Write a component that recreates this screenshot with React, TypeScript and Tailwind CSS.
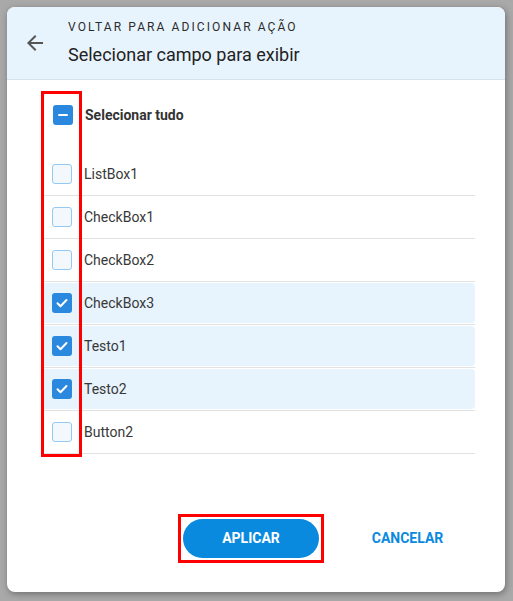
import { useState } from "react";

const FIELDS = [
  { name: "ListBox1", checked: false },
  { name: "CheckBox1", checked: false },
  { name: "CheckBox2", checked: false },
  { name: "CheckBox3", checked: true },
  { name: "Testo1", checked: true },
  { name: "Testo2", checked: true },
  { name: "Button2", checked: false },
];

function Box({ state }: { state: "off" | "on" | "mixed" }) {
  if (state === "off") {
    return <span className="block h-5 w-5 shrink-0 rounded-[3px] border border-[#93c9f2] bg-[#f3f8fd]" />;
  }
  return (
    <span className="flex h-5 w-5 shrink-0 items-center justify-center rounded-[3px] bg-[#2a88de]">
      {state === "on" ? (
        <svg width="14" height="14" viewBox="0 0 14 14" fill="none">
          <path d="M2.5 7.2l3 3 6-6.2" stroke="#fff" strokeWidth="2" strokeLinecap="round" strokeLinejoin="round" />
        </svg>
      ) : (
        <span className="block h-[2px] w-[10px] rounded-sm bg-white" />
      )}
    </span>
  );
}

export default function App() {
  const [fields, setFields] = useState(FIELDS);
  const count = fields.filter((f) => f.checked).length;
  const all = count === 0 ? "off" : count === fields.length ? "on" : "mixed";

  return (
    <div className="h-[601px] w-[513px] bg-[#a9a9a9] p-[7px] font-['Roboto',sans-serif]">
      <div className="relative flex h-[585px] w-[498px] flex-col overflow-hidden rounded-[8px] bg-white shadow-[1px_2px_7px_rgba(0,0,0,0.35)]">
        <div className="flex h-[73px] shrink-0 items-center border-b border-[#d6e2ec] bg-[#e8f4fd] pl-4">
          <svg width="24" height="24" viewBox="0 0 24 24" className="shrink-0">
            <path d="M20 11H7.83l5.59-5.59L12 4l-8 8 8 8 1.41-1.41L7.83 13H20v-2z" fill="#555" />
          </svg>
          <div className="ml-[21px]">
            <p className="text-[12px] leading-4 tracking-[2.1px] text-[#2b2b2b]">VOLTAR PARA ADICIONAR AÇÃO</p>
            <h2 className="mt-2 text-[18px] leading-6 text-[#222]">Selecionar campo para exibir</h2>
          </div>
        </div>

        <div className="pl-[34px] pr-[30px] pt-[14px]">
          <button
            type="button"
            onClick={() => setFields(fields.map((f) => ({ ...f, checked: all !== "on" })))}
            className="flex h-[42px] w-full items-center pl-3 text-left"
          >
            <Box state={all} />
            <span className="ml-3 text-[14px] font-bold text-[#333]">Selecionar tudo</span>
          </button>

          <div className="mt-[18px]">
            {fields.map((f, i) => (
              <div key={f.name} className="border-b border-[#e2e2e2]">
                <button
                  type="button"
                  onClick={() => setFields(fields.map((g, j) => (j === i ? { ...g, checked: !g.checked } : g)))}
                  className={`my-px flex h-10 w-full items-center rounded-[4px] pl-[11px] text-left ${f.checked ? "bg-[#e7f3fd]" : ""}`}
                >
                  <Box state={f.checked ? "on" : "off"} />
                  <span className="ml-3 text-[14px] text-[#383838]">{f.name}</span>
                </button>
              </div>
            ))}
          </div>
        </div>

        <div className="mt-[60px] flex items-start justify-end pr-[42px]">
          <div className="border-3 border-[#ff0000] p-[2px]">
            <button type="button" className="h-[39px] w-[136px] rounded-full bg-[#0a8adf] text-[14px] font-bold text-white">
              APLICAR
            </button>
          </div>
          <button type="button" className="ml-[28px] mt-[5px] h-[39px] w-[111px] text-[14px] font-bold text-[#0a8adf]">
            CANCELAR
          </button>
        </div>

        {/* annotation box around the checkbox column */}
        <div className="pointer-events-none absolute left-[34px] top-[84px] h-[366px] w-[41px] border-3 border-[#ff0000]" />
      </div>
    </div>
  );
}
